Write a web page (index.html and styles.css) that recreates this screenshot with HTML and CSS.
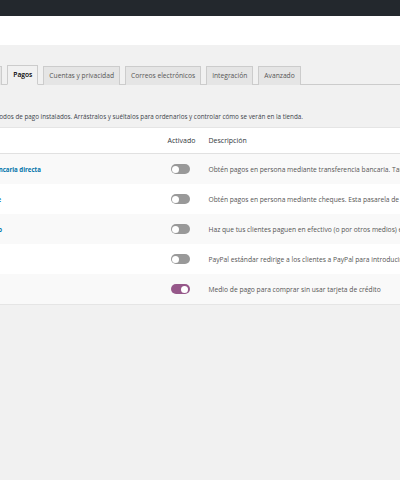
FILE: index.html
```html
<!DOCTYPE html>
<html lang="es">
<head>
<meta charset="utf-8">
<link rel="stylesheet" href="styles.css">
</head>
<body>
<div class="adminbar"></div>
<div class="pagehead"></div>
<div class="main">
  <nav class="tabs">
    <a class="tab">General</a>
    <a class="tab">Productos</a>
    <a class="tab">Envío</a>
    <a class="tab active">Pagos</a>
    <a class="tab">Cuentas y privacidad</a>
    <a class="tab">Correos electrónicos</a>
    <a class="tab">Integración</a>
    <a class="tab">Avanzado</a>
  </nav>
  <p class="intro">Los métodos de pago instalados. Arrástralos y suéltalos para ordenarlos y controlar cómo se verán en la tienda.</p>
  <table class="gateways">
    <colgroup>
      <col class="c-sort"><col class="c-name"><col class="c-status"><col class="c-desc">
    </colgroup>
    <thead>
      <tr><th></th><th>Método</th><th class="center">Activado</th><th>Descripción</th></tr>
    </thead>
    <tbody>
      <tr><td></td><td><a class="name">Transferencia bancaria directa</a></td><td class="center"><span class="toggle"></span></td><td>Obtén pagos en persona mediante transferencia bancaria. También conocido como transferencia directa.</td></tr>
      <tr><td></td><td><a class="name">Pagos por cheque</a></td><td class="center"><span class="toggle"></span></td><td>Obtén pagos en persona mediante cheques. Esta pasarela de pago offline también puede ser útil para probar compras.</td></tr>
      <tr><td></td><td><a class="name">Contra reembolso</a></td><td class="center"><span class="toggle"></span></td><td>Haz que tus clientes paguen en efectivo (o por otros medios) en el momento de la entrega.</td></tr>
      <tr><td></td><td><a class="name">PayPal</a></td><td class="center"><span class="toggle"></span></td><td>PayPal estándar redirige a los clientes a PayPal para introducir su información de pago.</td></tr>
      <tr><td></td><td><a class="name">Aplázame</a></td><td class="center"><span class="toggle on"></span></td><td>Medio de pago para comprar sin usar tarjeta de crédito</td></tr>
    </tbody>
  </table>
</div>
</body>
</html>
```
FILE: styles.css
```css
html, body {
  margin: 0;
  padding: 0;
}
body {
  background: #f1f1f1;
  font-family: "Open Sans", "Liberation Sans", sans-serif;
  font-size: 6.7px;
  color: #444;
  width: 400px;
  height: 480px;
  overflow: hidden;
}
.adminbar {
  height: 16px;
  background: #23282d;
}
.pagehead {
  height: 29px;
  background: #fff;
}
.main {
  padding-top: 20px;
  overflow: hidden;
}
.tabs {
  display: flex;
  gap: 5px;
  margin-left: -125px;
  padding-left: 8px;
  border-bottom: 1px solid #ccc;
  height: 19px;
  align-items: flex-end;
}
.tab {
  display: block;
  box-sizing: border-box;
  height: 19px;
  line-height: 18px;
  padding: 0 5px;
  border: 1px solid #ccc;
  border-bottom: none;
  background: #e5e5e5;
  color: #555;
  font-size: 6.7px;
  font-weight: 400;
  white-space: nowrap;
  margin-bottom: -1px;
}
.tab.active {
  background: #f1f1f1;
  color: #000;
  font-weight: 600;
  height: 20px;
  border-bottom: 1px solid #f1f1f1;
}
.intro {
  margin: 27px 0 0 -24px;
  white-space: nowrap;
  color: #3c434a;
  font-size: 6.3px;
  line-height: 9px;
}
.gateways {
  margin-top: 6px;
  margin-left: -91px;
  border-collapse: collapse;
  table-layout: fixed;
  width: 701px;
  background: #fff;
  border: 1px solid #e5e5e5;
  box-shadow: 0 1px 1px rgba(0,0,0,.04);
}
.c-sort { width: 30px; }
.c-name { width: 220px; }
.c-status { width: 41px; }
.c-desc { width: 410px; }
.gateways th, .gateways td {
  text-align: left;
  white-space: nowrap;
  overflow: hidden;
  padding: 0 8px;
  height: 30px;
}
.gateways th {
  height: 25px;
  font-weight: 400;
  font-size: 7px;
  color: #32373c;
  border-bottom: 1px solid #e1e1e1;
}
.gateways td {
  color: #555;
}
.gateways tbody tr:nth-child(odd) td {
  background: #f9f9f9;
}
.gateways .center {
  text-align: center;
}
.name {
  color: #0073aa;
  font-weight: 700;
  font-size: 6.1px;
}
.toggle {
  display: inline-block;
  vertical-align: middle;
  position: relative;
  width: 19px;
  height: 10px;
  border-radius: 5px;
  background: #999;
}
.toggle::after {
  content: "";
  position: absolute;
  top: 1.5px;
  left: 1.5px;
  width: 7px;
  height: 7px;
  border-radius: 50%;
  background: #fff;
}
.toggle.on {
  background: #96588a;
}
.toggle.on::after {
  left: auto;
  right: 1.5px;
}
```
